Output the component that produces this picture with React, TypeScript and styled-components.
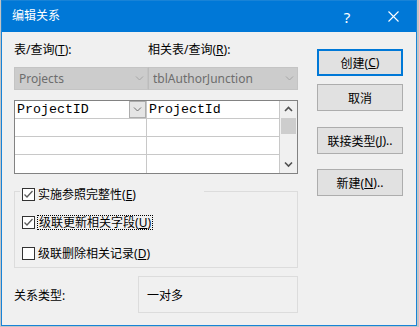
import styled, { createGlobalStyle } from 'styled-components';

const GlobalStyle = createGlobalStyle`
  html, body {
    margin: 0;
    padding: 0;
    background: #c4c4c4;
  }
  body {
    font-family: "Noto Sans", "Noto Sans CJK SC", sans-serif;
    font-size: 12px;
    color: #000;
  }
`;

const Window = styled.div`
  width: 416px;
  height: 326px;
  margin-left: 1px;
  box-sizing: border-box;
  border: 1px solid #1883d7;
  background: #f0f0f0;
  display: flex;
  flex-direction: column;
`;

const TitleBar = styled.div`
  height: 31px;
  flex: none;
  background: #0078d7;
  color: #fff;
  display: flex;
  align-items: center;
  padding-left: 10px;
  font-size: 12px;
`;

const TitleText = styled.div`
  flex: 1;
  line-height: 16px;
  margin-top: -1px;
`;

const TitleButton = styled.div<{ $w: number }>`
  width: ${(p) => p.$w}px;
  height: 31px;
  display: flex;
  align-items: center;
  justify-content: center;
  font-size: 15px;
`;

const Body = styled.div`
  flex: 1;
  display: flex;
  padding-left: 12px;
`;

const LeftColumn = styled.div`
  width: 284px;
  display: flex;
  flex-direction: column;
  padding-top: 10px;
`;

const RightColumn = styled.div`
  width: 86px;
  margin-left: 19px;
  padding-top: 17px;
  display: flex;
  flex-direction: column;
`;

const PairRow = styled.div`
  display: grid;
  grid-template-columns: 134px 150px;
`;

const Label = styled.div`
  line-height: 16px;
  height: 16px;
  white-space: nowrap;
`;

const Combo = styled.div`
  height: 23px;
  margin-top: 9px;
  box-sizing: border-box;
  border: 1px solid #c4c4c4;
  background: #cccccc;
  color: #6d6d6d;
  display: flex;
  align-items: center;
  padding: 0 3px 0 4px;
  & + & {
    border-left-color: #bcbcbc;
  }
`;

const ComboText = styled.span`
  flex: 1;
  white-space: nowrap;
  overflow: hidden;
`;

const Grid = styled.div`
  margin-top: 10px;
  height: 74px;
  box-sizing: border-box;
  border: 1px solid #828282;
  background: #fff;
  display: grid;
  grid-template-columns: 132px 133px 17px;
  grid-template-rows: repeat(4, 18px);
`;

const Cell = styled.div<{ $last?: boolean }>`
  box-sizing: border-box;
  border-right: 1px solid #c8c8c8;
  border-bottom: ${(p) => (p.$last ? 'none' : '1px solid #c8c8c8')};
  font-family: "Liberation Mono", "DejaVu Sans Mono", monospace;
  font-size: 13.3px;
  line-height: 17px;
  padding-left: 2px;
  display: flex;
  align-items: center;
  white-space: nowrap;
`;

const CellText = styled.span`
  flex: 1;
`;

const CellDrop = styled.div`
  width: 17px;
  height: 17px;
  box-sizing: border-box;
  border: 1px solid #adadad;
  background: #e5e5e5;
  display: flex;
  align-items: center;
  justify-content: center;
`;

const ScrollBar = styled.div`
  grid-column: 3;
  grid-row: 1 / span 4;
  background: #f0f0f0;
  display: flex;
  flex-direction: column;
  align-items: center;
`;

const ScrollArrow = styled.div`
  height: 17px;
  width: 100%;
  display: flex;
  align-items: center;
  justify-content: center;
`;

const ScrollThumb = styled.div`
  width: 15px;
  height: 16px;
  background: #cdcdcd;
`;

const ScrollTrack = styled.div`
  flex: 1;
`;

const Group = styled.div`
  margin-top: 17px;
  height: 77px;
  box-sizing: border-box;
  border: 1px solid #dcdcdc;
  display: flex;
  flex-direction: column;
  padding-left: 7px;
`;

const CheckRow = styled.div<{ $top: number; $legend?: boolean }>`
  margin-top: ${(p) => p.$top}px;
  height: 16px;
  display: flex;
  align-items: center;
  background: ${(p) => (p.$legend ? '#f0f0f0' : 'transparent')};
  width: ${(p) => (p.$legend ? '182px' : 'auto')};
  margin-left: ${(p) => (p.$legend ? '-2px' : '0')};
  padding-left: ${(p) => (p.$legend ? '2px' : '0')};
`;

const Box = styled.div`
  width: 13px;
  height: 13px;
  box-sizing: border-box;
  border: 1px solid #333;
  background: #fff;
  flex: none;
  display: flex;
  align-items: center;
  justify-content: center;
`;

const CheckLabel = styled.span<{ $focus?: boolean }>`
  margin-left: ${(p) => (p.$focus ? '2px' : '3px')};
  padding: ${(p) => (p.$focus ? '0 1px' : '0')};
  line-height: 13px;
  border: ${(p) => (p.$focus ? '1px dotted #000' : 'none')};
  white-space: nowrap;
`;

const RelationRow = styled.div`
  margin-top: 8px;
  display: flex;
  align-items: center;
`;

const RelationLabel = styled.div`
  width: 124px;
`;

const RelationBox = styled.div`
  width: 160px;
  height: 37px;
  box-sizing: border-box;
  border: 1px solid #dcdcdc;
  padding-left: 8px;
  display: flex;
  align-items: center;
`;

const Button = styled.div<{ $top: number; $default?: boolean }>`
  margin-top: ${(p) => p.$top}px;
  height: 27px;
  box-sizing: border-box;
  border: ${(p) => (p.$default ? '2px solid #0078d7' : '1px solid #adadad')};
  background: #e1e1e1;
  display: flex;
  align-items: center;
  justify-content: center;
  white-space: nowrap;
`;

const Chevron = ({ color, up = false, w = 7, sw = 1 }: { color: string; up?: boolean; w?: number; sw?: number }) => (
  <svg width={w + 2} height={w / 2 + 3} viewBox={`0 0 ${w + 2} ${w / 2 + 3}`}>
    <polyline
      points={
        up
          ? `1,${w / 2 + 1.5} ${w / 2 + 1},1.5 ${w + 1},${w / 2 + 1.5}`
          : `1,1.5 ${w / 2 + 1},${w / 2 + 1.5} ${w + 1},1.5`
      }
      fill="none"
      stroke={color}
      strokeWidth={sw}
    />
  </svg>
);

const Tick = () => (
  <svg width="11" height="11" viewBox="0 0 11 11">
    <polyline points="1.5,5.5 4,8 9.5,2" fill="none" stroke="#5c5c5c" strokeWidth="1.3" />
  </svg>
);

const Close = () => (
  <svg width="11" height="11" viewBox="0 0 11 11">
    <path d="M0.5 0.5 L10.5 10.5 M10.5 0.5 L0.5 10.5" stroke="#fff" strokeWidth="1.1" />
  </svg>
);

const checks = [
  { text: '实施参照完整性', key: 'E', checked: true, top: -6, legend: true },
  { text: '级联更新相关字段', key: 'U', checked: true, top: 12, focus: true },
  { text: '级联删除相关记录', key: 'D', checked: false, top: 15 },
];

export default function App() {
  return (
    <>
      <GlobalStyle />
      <Window>
        <TitleBar>
          <TitleText>编辑关系</TitleText>
          <TitleButton $w={46}>?</TitleButton>
          <TitleButton $w={46}>
            <Close />
          </TitleButton>
        </TitleBar>
        <Body>
          <LeftColumn>
            <PairRow>
              <Label>
                表/查询(<u>T</u>):
              </Label>
              <Label>
                相关表/查询(<u>R</u>):
              </Label>
            </PairRow>
            <PairRow>
              <Combo>
                <ComboText>Projects</ComboText>
                <Chevron color="#a6a6a6" />
              </Combo>
              <Combo>
                <ComboText>tblAuthorJunction</ComboText>
                <Chevron color="#a6a6a6" />
              </Combo>
            </PairRow>
            <Grid>
              <Cell style={{ paddingRight: 0 }}>
                <CellText>ProjectID</CellText>
                <CellDrop>
                  <Chevron color="#707070" />
                </CellDrop>
              </Cell>
              <Cell>ProjectId</Cell>
              <ScrollBar>
                <ScrollArrow>
                  <Chevron color="#505050" up sw={1.6} />
                </ScrollArrow>
                <ScrollThumb />
                <ScrollTrack />
                <ScrollArrow>
                  <Chevron color="#505050" sw={1.6} />
                </ScrollArrow>
              </ScrollBar>
              <Cell />
              <Cell />
              <Cell />
              <Cell />
              <Cell $last />
              <Cell $last />
            </Grid>
            <Group>
              {checks.map((c) => (
                <CheckRow key={c.key} $top={c.top} $legend={c.legend}>
                  <Box>{c.checked && <Tick />}</Box>
                  <CheckLabel $focus={c.focus}>
                    {c.text}(<u>{c.key}</u>)
                  </CheckLabel>
                </CheckRow>
              ))}
            </Group>
            <RelationRow>
              <RelationLabel>关系类型:</RelationLabel>
              <RelationBox>一对多</RelationBox>
            </RelationRow>
          </LeftColumn>
          <RightColumn>
            <Button $top={0} $default>
              创建(<u>C</u>)
            </Button>
            <Button $top={8}>取消</Button>
            <Button $top={16}>
              联接类型(<u>J</u>)..
            </Button>
            <Button $top={15}>
              新建(<u>N</u>)..
            </Button>
          </RightColumn>
        </Body>
      </Window>
    </>
  );
}
